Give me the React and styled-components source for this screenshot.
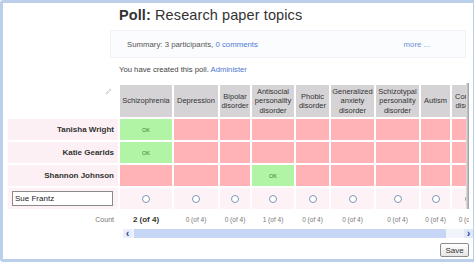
import styled, { createGlobalStyle } from 'styled-components';

const GlobalStyle = createGlobalStyle`
	html, body {
		margin: 0;
		padding: 0;
		background: #ffffff;
	}
	body {
		font-family: 'Liberation Sans', Arial, sans-serif;
		color: #333;
	}
`;

const options = [
	{ label: 'Schizophrenia', width: 52 },
	{ label: 'Depression', width: 44 },
	{ label: 'Bipolar disorder', width: 30 },
	{ label: 'Antisocial personality disorder', width: 42 },
	{ label: 'Phobic disorder', width: 33 },
	{ label: 'Generalized anxiety disorder', width: 43 },
	{ label: 'Schizotypal personality disorder', width: 43 },
	{ label: 'Autism', width: 29 },
	{ label: 'Conduct disorder', width: 34 },
];

const participants = [
	{ name: 'Tanisha Wright', votes: [0] },
	{ name: 'Katie Gearlds', votes: [0] },
	{ name: 'Shannon Johnson', votes: [3] },
];

const counts = ['2 (of 4)', '0 (of 4)', '0 (of 4)', '1 (of 4)', '0 (of 4)', '0 (of 4)', '0 (of 4)', '0 (of 4)', '0 (of 4)'];

const columns = `110px ${options.map((o) => o.width + 'px').join(' ')}`;

const App = () => {
	return (
		<>
			<GlobalStyle />
			<Frame>
				<Header>
					<Title>
						<b>Poll:</b> Research paper topics
					</Title>
					<Summary>
						<span>
							Summary: 3 participants, <Link>0 comments</Link>
						</span>
						<Link className='more'>more ...</Link>
					</Summary>
					<Created>
						You have created this poll. <Link>Administer</Link>
					</Created>
				</Header>

				<Viewport>
					<Grid>
						<Corner>
							<svg width='7' height='7' viewBox='0 0 7 7'>
								<path d='M1 6 L2 4 L5 1 L6 2 L3 5 Z' fill='none' stroke='#c8c8c8' strokeWidth='0.8' />
							</svg>
						</Corner>
						{options.map((o) => (
							<HeadCell key={o.label}>{o.label}</HeadCell>
						))}

						{participants.map((p) => (
							<Row key={p.name}>
								<NameCell>{p.name}</NameCell>
								{options.map((o, i) => (
									<VoteCell key={o.label} $ok={p.votes.includes(i)}>
										{p.votes.includes(i) ? 'OK' : ''}
									</VoteCell>
								))}
							</Row>
						))}

						<NameCell $input>
							<NameInput defaultValue='Sue Frantz' />
						</NameCell>
						{options.map((o) => (
							<RadioCell key={o.label}>
								<Radio />
							</RadioCell>
						))}
					</Grid>
				</Viewport>

				<CountRow>
					<CountLabel>Count</CountLabel>
					{counts.map((c, i) => (
						<CountValue key={i} $strong={i === 0}>
							{c}
						</CountValue>
					))}
				</CountRow>

				<Scrollbar>
					<Arrow>‹</Arrow>
					<Track>
						<Thumb />
					</Track>
					<Arrow className='right'>›</Arrow>
				</Scrollbar>

				<Footer>
					<SaveButton>Save</SaveButton>
				</Footer>
			</Frame>
		</>
	);
};

export default App;

const Frame = styled.div`
	width: 465px;
	height: 256px;
	border: 3px solid #bccfea;
	border-radius: 3px;
	background: #ffffff;
	overflow: hidden;
	position: relative;
	padding: 0 0 0 5px;
	box-sizing: content-box;
`;

const Header = styled.div`
	margin-left: 111px;
	padding-top: 4px;
`;

const Title = styled.div`
	font-size: 14.5px;
	color: #333;
	height: 20px;
	line-height: 16px;
	letter-spacing: 0.1px;

	& > b {
		font-weight: bold;
	}
`;

const Summary = styled.div`
	box-sizing: border-box;
	margin: 3px 0 0 -9px;
	height: 28px;
	width: 356px;
	border: 1px solid #eef1f6;
	background: #fbfcfe;
	display: flex;
	align-items: center;
	justify-content: space-between;
	padding: 0 35px 0 16px;
	font-size: 7.8px;
	color: #555;

	& > .more {
		color: #6b8fd6;
	}
`;

const Link = styled.span`
	color: #4f78d0;
`;

const Created = styled.div`
	margin-top: 6px;
	font-size: 7.7px;
	color: #444;
	height: 12px;
	line-height: 12px;
`;

const Viewport = styled.div`
	margin-top: 7px;
	width: 461px;
	overflow: hidden;
	position: relative;

	&::after {
		content: '';
		position: absolute;
		right: 0;
		top: 0;
		bottom: 0;
		width: 3px;
		background: linear-gradient(to right, #e4e4e4, #9a9a9a);
	}
`;

const Grid = styled.div`
	display: grid;
	grid-template-columns: ${columns};
	grid-template-rows: 32px 21px 21px 21px 21px;
	gap: 2px;
	width: max-content;
	padding-top: 2px;
`;

const Row = styled.div`
	display: contents;
`;

const Corner = styled.div`
	display: flex;
	justify-content: flex-end;
	align-items: flex-start;
	padding: 3px 6px 0 0;
`;

const HeadCell = styled.div`
	background: #d6d3d7;
	display: flex;
	align-items: center;
	justify-content: center;
	text-align: center;
	font-size: 7.5px;
	line-height: 9.5px;
	color: #333;
	padding: 0 1px;
	overflow: hidden;
`;

const NameCell = styled.div`
	background: ${(p) => (p.$input ? '#fdf3f7' : '#fcf0f5')};
	display: flex;
	align-items: center;
	justify-content: ${(p) => (p.$input ? 'flex-start' : 'flex-end')};
	padding: ${(p) => (p.$input ? '0 0 0 4px' : '0 4px 0 0')};
	font-size: 8px;
	font-weight: bold;
	color: #333;
`;

const NameInput = styled.input`
	width: 101px;
	height: 15px;
	box-sizing: border-box;
	border: 1px solid #8a8a8a;
	font-family: 'Liberation Sans', Arial, sans-serif;
	font-size: 8px;
	padding: 0 2px;
	color: #222;
	background: #fff;
`;

const VoteCell = styled.div`
	background: ${(p) => (p.$ok ? '#b2f4a6' : '#ffb3b7')};
	display: flex;
	align-items: center;
	justify-content: center;
	font-size: 5.5px;
	color: #3a7a30;
`;

const RadioCell = styled.div`
	background: #fdf3f7;
	display: flex;
	align-items: center;
	justify-content: center;
`;

const Radio = styled.span`
	width: 6px;
	height: 6px;
	border: 1px solid #7f96b4;
	border-radius: 50%;
	background: #fff;
`;

const CountRow = styled.div`
	display: grid;
	grid-template-columns: ${columns};
	column-gap: 2px;
	margin-top: 4px;
	height: 12px;
	align-items: center;
	width: 461px;
	overflow: hidden;
`;

const CountLabel = styled.div`
	text-align: right;
	padding-right: 4px;
	font-size: 7px;
	color: #777;
`;

const CountValue = styled.div`
	text-align: center;
	white-space: nowrap;
	font-size: ${(p) => (p.$strong ? '8px' : '6.5px')};
	font-weight: ${(p) => (p.$strong ? 'bold' : 'normal')};
	color: ${(p) => (p.$strong ? '#333' : '#777')};
`;

const Scrollbar = styled.div`
	display: flex;
	align-items: center;
	margin: 4px 0 0 115px;
	width: 350px;
	height: 9px;
	background: #eef2fb;
`;

const Arrow = styled.div`
	width: 9px;
	height: 9px;
	font-size: 11px;
	font-weight: bold;
	line-height: 8px;
	text-align: center;
	color: #2a4c8e;
	background: #e8eefb;

	&.right {
		background: #dfe7f8;
	}
`;

const Track = styled.div`
	flex: 1;
	height: 100%;
	display: flex;
	background: #f1f4fb;
`;

const Thumb = styled.div`
	width: 312px;
	margin-left: 2px;
	height: 100%;
	background: #c7d6f4;
`;

const Footer = styled.div`
	display: flex;
	justify-content: flex-end;
	padding: 5px 4px 0 0;
`;

const SaveButton = styled.button`
	width: 29px;
	height: 14px;
	padding: 0;
	border: 1px solid #8c8c8c;
	border-radius: 2px;
	background: linear-gradient(#ffffff, #e6e6e6);
	font-family: 'Liberation Sans', Arial, sans-serif;
	font-size: 8px;
	color: #333;
`;
